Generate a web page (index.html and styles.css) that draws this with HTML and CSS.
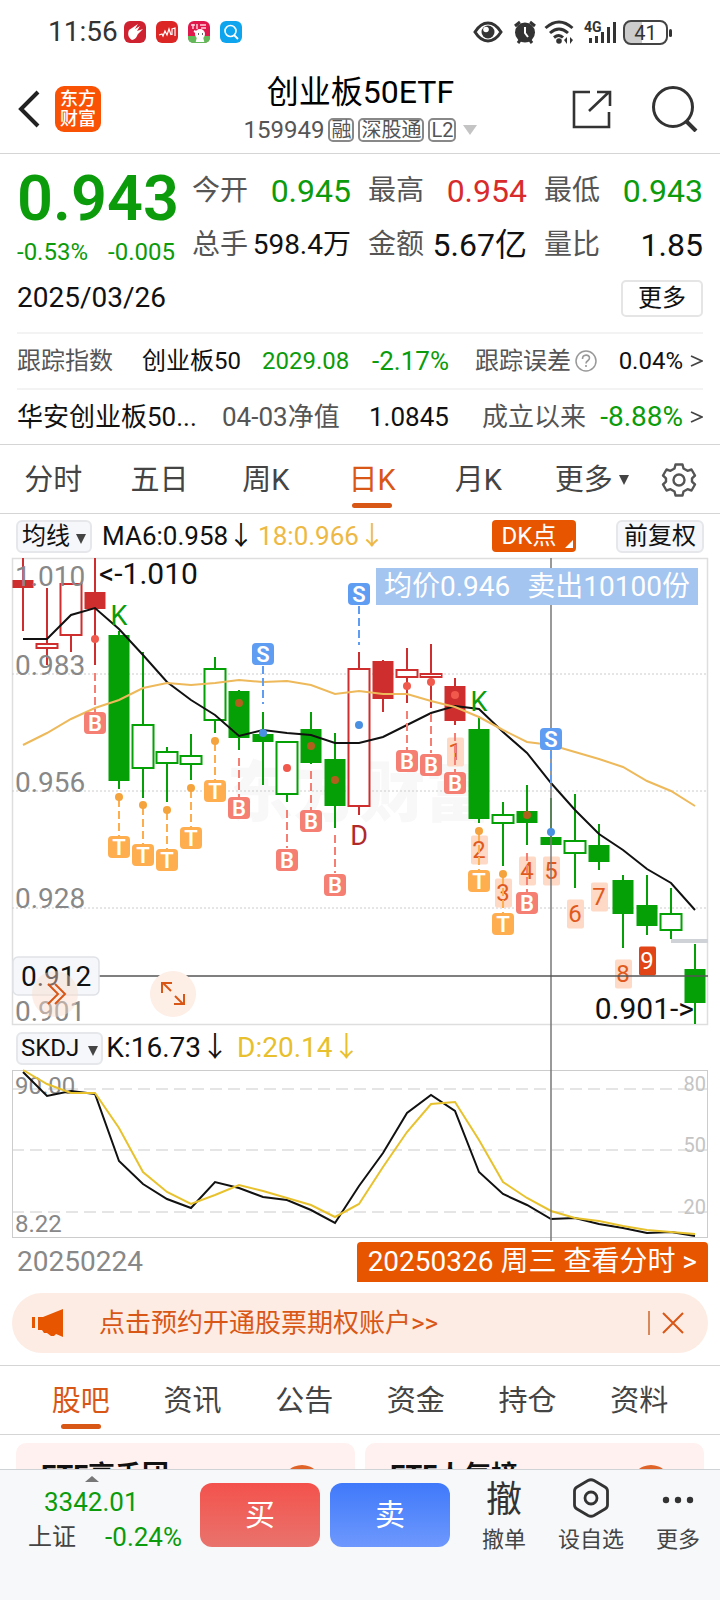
FILE: index.html
```html
<!DOCTYPE html>
<html lang="zh-CN">
<head>
<meta charset="utf-8">
<meta name="viewport" content="width=device-width, initial-scale=1">
<title>创业板50ETF</title>
<link rel="stylesheet" href="styles.css">
</head>
<body>
<div class="status">
  <span class="clock">11:56</span>
  <svg class="app-dot" viewBox="0 0 22 22"><rect width="22" height="22" rx="6" fill="#cf2230"/><path d="M14 3 5 9c-2 5 0 8 3 10 5-1 5-5 6-6l5-5-6 2 3-5-5 3z" fill="#fff"/></svg>
  <svg class="app-dot" viewBox="0 0 22 22"><rect width="22" height="22" rx="6" fill="#dc2626"/><path d="M3 14l3-1 1 2 2-5 2 4 2-6 2 6M16 14V8l3-1v8" fill="none" stroke="#fff" stroke-width="1.2"/></svg>
  <svg class="app-dot" viewBox="0 0 22 22"><rect width="22" height="22" rx="6" fill="#e0194d"/><path d="M0 15h22v2a5 5 0 0 1-5 5H5a5 5 0 0 1-5-5z" fill="#63b85a"/><path d="M3 4h4M5 3v5M9 3v5M12 4h6M13 7h5" stroke="#ffd6e0" stroke-width="1.4"/><circle cx="12" cy="13" r="5" fill="#fff"/><path d="M6 10l4 2M9 20l1-4h4l1 4z" fill="#fff" stroke="#fff" stroke-width="2"/><path d="M10 13h1M14 13h1" stroke="#333" stroke-width="1.5"/></svg>
  <svg class="app-dot" viewBox="0 0 22 22"><rect width="22" height="22" rx="6" fill="#0ea5ee"/><circle cx="10.500" cy="10" r="5.500" fill="none" stroke="#fff" stroke-width="1.6"/><path d="M14 14l4 4" stroke="#fff" stroke-width="1.800"/></svg>
  <span class="push"></span>
  <svg class="st-eye" viewBox="0 0 30 22"><path d="M2 11C7 3 11 2 15 2s8 1 13 9c-5 8-9 9-13 9S7 19 2 11z" fill="none" stroke="#333" stroke-width="3"/><circle cx="15" cy="11" r="6.500" fill="#333"/><circle cx="13" cy="8.500" r="2.800" fill="#fff"/></svg>
  <svg class="st-alarm" viewBox="0 0 24 24"><circle cx="12" cy="12.500" r="10" fill="#333"/><path d="M12 7v6l3 4" fill="none" stroke="#fff" stroke-width="2"/><path d="M2 6l5-4M22 6l-5-4M5 23l3-4M19 23l-3-4" stroke="#333" stroke-width="3"/></svg>
  <svg class="st-wifi" viewBox="0 0 30 24"><path d="M1.500 8Q15-4 28.500 8M6 13q9-8 18 0M10 17.500q5-4 9 0" fill="none" stroke="#333" stroke-width="3"/><circle cx="15" cy="21" r="2.800" fill="#333"/><path d="M20 20l3-3v7zM29 20l-3-3v7z" fill="#333"/></svg>
  <svg class="st-signal" viewBox="0 0 32 24"><text x="0" y="12" font-size="14" font-weight="700" font-family="Roboto, sans-serif" fill="#333">4G</text><path d="M6.500 23v-5M12.500 23v-7M18.500 23V12M24.500 23V7M30.500 23V2" stroke="#333" stroke-width="3"/></svg>
  <span class="battery">41</span>
</div>

<header class="nav">
  <button class="icon-btn" aria-label="返回"><svg width="22" height="38" viewBox="0 0 22 38"><path d="M20 2 3 19l17 17" fill="none" stroke="#222" stroke-width="4"/></svg></button>
  <span class="logo">东方<br>财富</span>
  <div class="nav-title">
    <h1>创业板50ETF</h1>
    <p><span>159949</span><b>融</b><b>深股通</b><b>L2</b><i class="tri"></i></p>
  </div>
  <div class="nav-actions">
    <button class="icon-btn" aria-label="分享"><svg width="40" height="40" viewBox="0 0 40 40"><path d="M18 3H2v35h35V23M17 22 37 3M25 3h13v14" fill="none" stroke="#333" stroke-width="2.600"/></svg></button>
    <button class="icon-btn" aria-label="搜索"><svg width="46" height="46" viewBox="0 0 46 46"><circle cx="21" cy="21" r="19.500" fill="none" stroke="#333" stroke-width="3"/><path d="M34 35l10 10" stroke="#333" stroke-width="4"/></svg></button>
  </div>
</header>

<main class="content">
  <section class="quote">
    <div class="price">
      <strong>0.943</strong>
      <div class="change"><span>-0.53%</span><span>-0.005</span></div>
    </div>
    <dl class="stats">
      <div><dt>今开</dt><dd class="down">0.945</dd></div>
      <div><dt>最高</dt><dd class="up">0.954</dd></div>
      <div><dt>最低</dt><dd class="down">0.943</dd></div>
      <div><dt>总手</dt><dd class="small">598.4万</dd></div>
      <div><dt>金额</dt><dd>5.67亿</dd></div>
      <div><dt>量比</dt><dd>1.85</dd></div>
    </dl>
    <div class="date-row"><time>2025/03/26</time><button class="outline">更多</button></div>
  </section>
  <div class="facts">
    <div class="fact index-row">
      <span class="grey">跟踪指数</span><span>创业板50</span><span class="down">2029.08</span><span class="down rate">-2.17%</span>
      <a href="#error" class="fact-end"><span class="grey">跟踪误差</span><svg width="22" height="22" viewBox="0 0 22 22"><circle cx="11" cy="11" r="10" fill="none" stroke="#999" stroke-width="1.500"/><path d="M7.500 9c0-5 7-5 7-1 0 3-3.500 2.500-3.500 5.500M11 15v2" fill="none" stroke="#999" stroke-width="1.600"/></svg><span class="push"></span><span>0.04%</span><svg class="chev" viewBox="0 0 13 14"><path d="M1 2l11 5-11 5" fill="none" stroke="#444" stroke-width="1.700"/></svg></a>
    </div>
    <div class="fact nav-row">
      <span>华安创业板50...</span><span class="grey">04-03净值</span><span>1.0845</span>
      <a href="#since" class="fact-end"><span class="grey">成立以来</span><span class="push"></span><span class="down since">-8.88%</span><svg class="chev" viewBox="0 0 13 14"><path d="M1 2l11 5-11 5" fill="none" stroke="#444" stroke-width="1.700"/></svg></a>
    </div>
  </div>

  <nav class="periods">
    <button>分时</button><button>五日</button><button>周K</button><button class="active">日K</button><button>月K</button><button>更多<i class="tri"></i></button>
    <button aria-label="设置"><svg width="36" height="36" viewBox="0 0 36 36" fill="none" stroke="#555" stroke-width="2.400" stroke-linejoin="round"><path d="M14.500 2.500h7l1 4 4 2.300 4-1.300 3.500 6-3 2.800v3.400l3 2.800-3.500 6-4-1.300-4 2.300-1 4h-7l-1-4-4-2.300-4 1.300-3.500-6 3-2.800v-3.400l-3-2.800 3.500-6 4 1.300 4-2.300z"/><circle cx="18" cy="18" r="5.500"/></svg></button>
  </nav>

  <section class="chart">
    <div class="legend">
      <button class="chip">均线<i class="tri"></i></button><span>MA6:0.958↓</span><span class="ma18">18:0.966↓</span>
      <span class="push"></span>
      <button class="dk">DK点</button><button class="chip adj">前复权</button>
    </div>
    <svg class="kline" id="kline" viewBox="0 0 696 468" role="img" aria-label="日K线"></svg>
    <div class="legend sub">
      <button class="chip">SKDJ<i class="tri"></i></button><span>K:16.73↓</span><span class="d-line">D:20.14↓</span>
    </div>
    <svg class="skdj" id="skdj" viewBox="0 0 696 168" role="img" aria-label="SKDJ"></svg>
    <div class="axis"><span>20250224</span><a href="#minute">20250326 周三 查看分时 &gt;</a></div>
  </section>

  <div class="banner">
    <svg width="32" height="28" viewBox="0 0 32 28" fill="#e85500"><path d="M0 8h3v11H0zM6 8h5L31 0v28l-7-3-2 2h-3l-4-3h-3l-2-3H6z"/></svg>
    <a href="#option">点击预约开通股票期权账户&gt;&gt;</a>
    <button class="icon-btn" aria-label="关闭"><svg width="24" height="24" viewBox="0 0 24 24"><path d="M2 2l20 20M22 2 2 22" stroke="#d95716" stroke-width="2"/></svg></button>
  </div>

  <nav class="sections">
    <button class="active">股吧</button><button>资讯</button><button>公告</button><button>资金</button><button>持仓</button><button>资料</button>
  </nav>
  <div class="cards">
    <article><h2>ETF高手团</h2><i class="disc"></i></article>
    <article><h2>ETF人气榜</h2><i class="disc"></i></article>
  </div>
</main>

<footer class="trade">
  <div class="market">
    <i class="tri up-tri"></i>
    <span class="down">3342.01</span>
    <div><span>上证</span><span class="down">-0.24%</span></div>
  </div>
  <button class="buy">买</button>
  <button class="sell">卖</button>
  <button class="tool"><span class="big">撤</span>撤单</button>
  <button class="tool"><svg width="36" height="40" viewBox="0 0 36 40" fill="none" stroke="#333" stroke-width="2.800"><path d="M15 2.500q3-1.500 6 0l11 6.500q2.500 1.500 2.500 4v14q0 2.500-2.500 4l-11 6.500q-3 1.500-6 0L4 31q-2.500-1.500-2.500-4V13q0-2.500 2.500-4z"/><circle cx="18" cy="20" r="6"/></svg>设自选</button>
  <button class="tool"><svg width="32" height="40" viewBox="0 0 32 40" fill="#333"><circle cx="4" cy="22" r="3.200"/><circle cx="16" cy="22" r="3.200"/><circle cx="28" cy="22" r="3.200"/></svg>更多</button>
</footer>
<script src="chart.js"></script>
</body>
</html>
```
FILE: styles.css
```css
* { box-sizing: border-box; }
body {
  margin: 0;
  height: 100vh;
  display: flex;
  flex-direction: column;
  background: #fff;
  color: #111;
  font-family: Roboto, "Noto Sans CJK SC", sans-serif;
  font-size: 24px;
  line-height: 32px;
}
button { border: 0; padding: 0; background: none; font: inherit; color: inherit; }
a { color: inherit; text-decoration: none; }
h1, h2, p, dl, dd { margin: 0; font-weight: 400; }
svg { display: block; flex: none; }
.push { flex: 1; }
.icon-btn { display: flex; }
.down { color: #0b9b0b; }
.up { color: #d82c2c; }
.grey { color: #555; }
.tri { display: inline-block; border: 5px solid transparent; border-top: 10px solid #444; border-bottom: 0; }

.status { display: flex; align-items: center; gap: 10px; height: 64px; padding: 0 52px 0 48px; flex: none; }
.clock { font-size: 28px; color: #333; margin-right: -4px; }
.app-dot { width: 22px; height: 22px; }
.st-eye { width: 30px; }
.st-alarm { width: 24px; margin-right: -3px; }
.st-wifi { width: 30px; }
.st-signal { width: 32px; margin-right: -3px; overflow: visible; }
.battery { position: relative; width: 45px; height: 25px; border: 2px solid #444; border-radius: 8px; background: linear-gradient(90deg, #ccc 41%, #fff 41%); font-size: 20px; line-height: 22px; text-align: center; color: #333; }
.battery::after { content: ""; position: absolute; right: -6px; top: 7px; width: 3px; height: 8px; border-radius: 2px; background: #333; }

.nav { display: flex; align-items: center; height: 90px; padding: 0 22px 0 18px; border-bottom: 1px solid #d5d5d5; flex: none; }
.logo { margin-left: 15px; width: 46px; height: 46px; border-radius: 9px; background: #fa5205; color: #fff; font-size: 18px; line-height: 20px; padding-top: 3px; text-align: center; font-weight: 500; }
.nav-title { flex: 1; margin-left: 48px; text-align: center; }
.nav-title h1 { font-size: 32px; line-height: 40px; color: #000; }
.nav-title p { display: flex; justify-content: center; align-items: center; gap: 4px; color: #555; padding-top: 2px; }
.nav-title b { border: 2px solid #888; border-radius: 5px; font-size: 20px; line-height: 20px; padding: 0 1px; font-weight: 400; }
.nav-title .tri { border-width: 10px 7px 0; border-top-color: #c4c4c4; margin-left: 3px; }
.nav-actions { display: flex; align-items: center; gap: 40px; }

.content { flex: 1; min-height: 0; overflow: hidden; }
.quote { display: grid; grid-template-columns: 158px 1fr; column-gap: 17px; padding: 10px 17px 0; }
.price { padding-top: 2px; }
.price strong { display: block; font-size: 63px; line-height: 66px; color: #0b9b0b; font-weight: 600; }
.change { display: flex; justify-content: space-between; color: #0b9b0b; line-height: 32px; margin-top: 4px; }
.stats { display: grid; grid-template-columns: repeat(3, 1fr); column-gap: 17px; grid-auto-rows: 54px; }
.stats div { display: flex; justify-content: space-between; align-items: center; white-space: nowrap; line-height: 44px; }
.stats dt { color: #555; font-size: 28px; }
.stats dd { font-size: 32px; }
.stats .small { font-size: 28px; }
.date-row { grid-column: 1 / -1; display: flex; justify-content: space-between; align-items: center; height: 52px; margin-bottom: 8px; font-size: 28px; }
.outline { width: 82px; height: 37px; border: 2px solid #e5e5e5; border-radius: 5px; font-size: 24px; line-height: 32px; }

.facts { padding: 0 17px; border-bottom: 1px solid #d5d5d5; }
.fact { display: grid; align-items: center; height: 56px; border-top: 2px solid #f3f3f3; white-space: nowrap; }
.index-row { grid-template-columns: 125fr 120fr 110fr 103fr 228fr; }
.nav-row { grid-template-columns: 205fr 147fr 113fr 221fr; font-size: 26px; }
.rate { font-size: 26px; }
.since { font-size: 28px; }
.fact-end { display: flex; align-items: center; gap: 4px; }
.fact-end .push { margin-left: -4px; }
.chev { width: 13px; margin-left: 3px; }

.periods { display: grid; grid-template-columns: repeat(5, 106fr) 120fr 54fr 14fr; height: 69px; border-bottom: 1px solid #d5d5d5; font-size: 29px; color: #444; }
.periods button { display: flex; align-items: center; justify-content: center; padding-top: 2px; }
.periods .tri { margin-left: 6px; }
.active { position: relative; color: #d95716; }
.active::after { content: ""; position: absolute; left: 50%; bottom: 5px; width: 40px; height: 5px; margin-left: -20px; border-radius: 3px; background: #d95716; }

.chart { padding: 0 12px; }
.legend { display: flex; align-items: center; gap: 4px; height: 44px; padding: 0 4px; font-size: 26px; white-space: nowrap; }
.chip { height: 33px; padding: 0 4px; margin-right: 6px; background: #f5f7fa; border: 2px solid #e5e7ea; border-radius: 6px; font-size: 24px; line-height: 28px; }
.chip .tri { margin-left: 6px; }
.legend .ma18 { color: #edb944; }
.dk { position: relative; width: 84px; height: 32px; background: #e85500; color: #fff; border-radius: 4px; font-size: 24px; padding-right: 10px; }
.dk::after { content: ""; position: absolute; right: 3px; bottom: 4px; border: 4px solid #fff; border-top-color: transparent; border-left-color: transparent; }
.chip.adj { margin: 0 0 0 36px; width: 88px; }
.sub { font-size: 28px; gap: 8px; }
.sub .chip { padding: 0 3px; margin-right: -5px; }
.sub .tri { margin-left: 9px; }
.sub .d-line { color: #e8bf2c; }
.kline, .skdj { width: 100%; height: auto; overflow: visible; }
.kline text, .skdj text { font-family: Roboto, "Noto Sans CJK SC", sans-serif; }
.axis { display: flex; justify-content: space-between; align-items: center; height: 47px; color: #888; font-size: 28px; padding-left: 5px; }
.axis a { height: 40px; line-height: 40px; padding: 0 11px; background: #e85500; color: #fff; border-radius: 4px 4px 0 0; }

.banner { display: flex; align-items: center; height: 60px; margin: 8px 12px 12px; padding: 0 23px 0 20px; border-radius: 30px; background: #fdece3; color: #d95716; font-size: 26px; }
.banner a { flex: 1; margin-left: 35px; }
.banner .icon-btn { border-left: 2px solid #d9885c; padding-left: 11px; }

.sections { display: grid; grid-template-columns: repeat(6, 1fr); height: 70px; padding: 0 25px; border-top: 1px solid #d5d5d5; border-bottom: 1px solid #d5d5d5; font-size: 29px; color: #444; }
.sections button { padding-top: 2px; }
.cards { display: grid; grid-template-columns: 1fr 1fr; gap: 10px; padding: 8px 16px; }
.cards article { display: flex; justify-content: space-between; height: 120px; border-radius: 10px; padding: 13px 33px 0 25px; background: #fff1ef; }
.cards h2 { font-size: 27px; line-height: 40px; font-weight: 700; }
.disc { width: 40px; height: 40px; margin-top: 9px; border-radius: 50%; background: #e0642a; }

.trade { flex: none; display: flex; height: 131px; padding: 13px 20px 0 28px; border-top: 1px solid #d0d3d6; background: #f6f8fa; position: relative; }
.market { width: 154px; margin-right: 18px; font-size: 26px; line-height: 36px; }
.market > span { margin-left: 16px; line-height: 38px; }
.market > div { display: flex; justify-content: space-between; font-size: 24px; line-height: 32px; color: #444; }
.market div .down { font-size: 26px; }
.up-tri { position: absolute; left: 85px; top: 6px; border-width: 0 7px 6px; border-bottom: 6px solid #777; }
.buy, .sell { flex: 1; height: 64px; border-radius: 12px; color: #fff; font-size: 30px; }
.buy { background: linear-gradient(#f4524c, #e9736d); }
.sell { background: linear-gradient(#3f79fa, #6e98fd); margin-left: 10px; }
.tool { display: flex; flex-direction: column; align-items: center; justify-content: space-between; height: 74px; margin: -5px 0 0 32px; font-size: 22px; line-height: 24px; color: #444; flex: none; }
.tool .big { font-size: 36px; line-height: 44px; color: #333; }
```
FILE: chart.js
```js
const STEP = 24;
const RED = '#cf2e2e', GREEN = '#05a005';
const x = i => 11 + STEP * i;

// [filled, rising, bodyTop, bodyBottom, wickTop, wickBottom]
const candles = [
  [1,1,22,30,0,73],[0,1,86,90,30,107],[0,1,26,77,26,94],[1,1,34,51,0,107],
  [1,0,77,223,73,231],[0,0,167,210,94,240],[0,0,194,205,189,244],[0,0,198,206,176,222],
  [0,0,111,162,99,175],[1,0,133,180,132,192],[1,0,176,184,154,227],[0,0,184,236,184,244],
  [1,0,171,205,154,206],[1,0,201,248,175,270],[0,1,111,248,94,257],[1,1,103,141,102,154],
  [0,1,112,119,90,145],[0,1,116,119,86,150],[1,1,128,163,120,167],[1,0,171,261,158,265],
  [0,0,257,265,244,308],[1,0,253,265,227,287],[1,0,279,287,240,287],[0,0,283,295,236,330],
  [1,0,287,304,266,312],[1,0,322,356,317,390],[1,0,347,368,317,377],[0,0,356,372,330,381],
  [1,0,411,445,386,466]
];
// [index, letter, dotY, dashStart, dashEnd, badgeCentre]
const marks = [
  [3,'B',81,115,154,165],[4,'T',239,241,278,289],[5,'T',247,249,286,297],[6,'T',252,254,291,302],
  [7,'T',230,232,269,280],[8,'T',183,185,222,233],[9,'B',145,200,239,250],[10,'S',175,108,146,96],
  [11,'B',210,252,290,302],[12,'B',188,213,252,263],[13,'B',222,277,315,327],[14,'S',167,48,87,36],
  [16,'B',128,153,192,203],[17,'B',124,156,195,207],[18,'B',137,175,214,225],[19,'T',273,275,312,323],
  [20,'T',316,318,355,366],[21,'B',257,295,334,345],[22,'S',274,193,230,181]
];
const counts = [[18,194],[19,292],[20,335],[21,313],[22,313],[23,356],[24,339],[25,416],[26,403]];
const ma6 = [81,81,57,50,71,97,124,142,157,178,172,175,177,185,185,179,167,155,148,151,174,195,225,252,276,292,311,325,352];
const ma18 = [187,175,161,150,142,130,125,127,125,122,124,123,127,136,133,136,136,143,149,159,172,184,187,194,201,209,223,233,248];
const kLine = [2,26,21,24,91,114,129,138,112,118,127,130,140,153,116,83,43,25,41,102,124,135,149,148,154,158,163,162,166];
const dLine = [0,14,23,23,58,102,122,134,125,115,121,128,135,147,134,97,62,34,32,70,112,128,141,148,151,156,160,162,164];
const tones = { B: '#f47f72', T: '#ffae4f', S: '#5f9df2' };

const poly = (ys, c) => `<polyline points="${ys.map((y, i) => x(i) + ',' + y).join(' ')}" fill="none" stroke="${c}" stroke-width="2"/>`;
const label = (px, py, s, size, c, extra = '') => `<text x="${px}" y="${py}" font-size="${size}" fill="${c}" ${extra}>${s}</text>`;
const line = (x1, y1, x2, y2, c, w, extra = '') => `<line x1="${x1}" y1="${y1}" x2="${x2}" y2="${y2}" stroke="${c}" stroke-width="${w}" ${extra}/>`;

let out = '<rect x="0.500" y="0.500" width="695" height="466" fill="none" stroke="#dedede" stroke-width="1.500"/>';
out += label(347, 258, '东方财富', 66, '#f8f8f8', 'text-anchor="middle" font-weight="900"');
[116, 233, 350].forEach(y => out += line(0, y, 696, y, '#ccc', 1, 'stroke-dasharray="2 2"'));
candles.forEach(([filled, up, top, bottom, hi, lo], i) => {
  const c = up ? RED : GREEN;
  out += line(x(i), hi, x(i), filled ? lo : top, c, 2);
  if (!filled) out += line(x(i), bottom, x(i), lo, c, 2);
  out += filled
    ? `<rect x="${x(i) - 10.5}" y="${top}" width="21" height="${bottom - top}" fill="${c}"/>`
    : `<rect x="${x(i) - 10.5}" y="${top}" width="21" height="${bottom - top}" fill="#fff" stroke="${c}" stroke-width="2"/>`;
});
out += line(659, 383, 696, 383, '#cfd3d8', 4);
out += poly(ma6, '#111') + poly(ma18, '#edb95a');
counts.forEach(([i, cy], n) => {
  const last = n === 8;
  out += `<rect x="${x(i) - 8}" y="${cy - 14.5}" width="17" height="29" rx="2" fill="${last ? '#e04417' : '#fdd9c6'}"/>`;
  out += label(x(i), cy + 8, n + 1, 24, last ? '#fff' : '#e0591c', 'text-anchor="middle"');
});
out += line(539, 0, 539, 468, '#777', 1.5);
marks.forEach(([i, t, dot, a, b, cy]) => {
  out += line(x(i), a, x(i), b, tones[t], 2, 'stroke-dasharray="8 4"');
  const dotTone = t === 'S' ? '#4a90e2' : t === 'T' ? '#f5a33c' : (candles[i][0] && !candles[i][1] ? '#b0601c' : '#f0594b');
  out += `<circle cx="${x(i)}" cy="${dot}" r="4" fill="${dotTone}"/>`;
  out += `<rect x="${x(i) - 11}" y="${cy - 11}" width="22" height="22" rx="4" fill="${tones[t]}"/>`;
  out += label(x(i), cy + 8, t, 22, '#fff', 'text-anchor="middle" font-weight="600"');
});
out += label(x(4), 67, 'K', 27, '#0b9b0b', 'text-anchor="middle"');
out += label(x(19), 153, 'K', 27, '#0b9b0b', 'text-anchor="middle"');
out += label(x(14), 287, 'D', 27, '#b02a2a', 'text-anchor="middle"');
[['1.010', 28], ['0.983', 117], ['0.956', 234], ['0.928', 350], ['0.901', 463]].forEach(([s, y]) => out += label(3, y, s, 28, '#888'));
out += label(87, 26, '&lt;-1.010', 30, '#111');
out += label(682, 461, '0.901-&gt;', 30, '#111', 'text-anchor="end"');
out += '<rect x="364" y="10" width="322" height="37" fill="#a3c5f0"/>' + label(372, 38, '均价0.946', 28, '#fff') + label(678, 38, '卖出10100份', 28, '#fff', 'text-anchor="end"');
out += line(87, 418, 696, 418, '#555', 1.5);
out += '<rect x="1" y="399" width="86" height="38" rx="5" fill="#f5f7fa" stroke="#dfe2e6" stroke-width="1.500"/>' + label(9, 428, '0.912', 28, '#111');
out += '<g fill="none" stroke="#d95716" stroke-width="2"><circle cx="43" cy="436" r="23" fill="#fbdccb" fill-opacity=".45" stroke="none"/><path d="M36 426l10 10-10 10M43 426l10 10-10 10"/><circle cx="161" cy="436" r="23" fill="#fdeee6" stroke="none"/><path d="M159 433l-8-8M150 435v-10h10M163 438l8 8M172 436v10h-10"/></g>';
document.getElementById('kline').innerHTML = out;

let sub = '<rect x="0.500" y="0.500" width="695" height="167" fill="none" stroke="#ccc"/>';
[[19, 80], [80, 50], [142, 20]].forEach(([y, n]) => {
  sub += line(0, y, 696, y, '#ccc', 1.2, 'stroke-dasharray="12 6"');
  sub += label(694, y + 2, n, 20, '#c4c4c4', 'text-anchor="end"');
});
sub += label(3, 24, '90.00', 24, '#888') + label(3, 162, '8.22', 24, '#888');
sub += poly(kLine, '#111') + poly(dLine, '#e8c22e');
sub += line(539, -44, 539, 171, '#777', 1.5);
document.getElementById('skdj').innerHTML = sub;
```
